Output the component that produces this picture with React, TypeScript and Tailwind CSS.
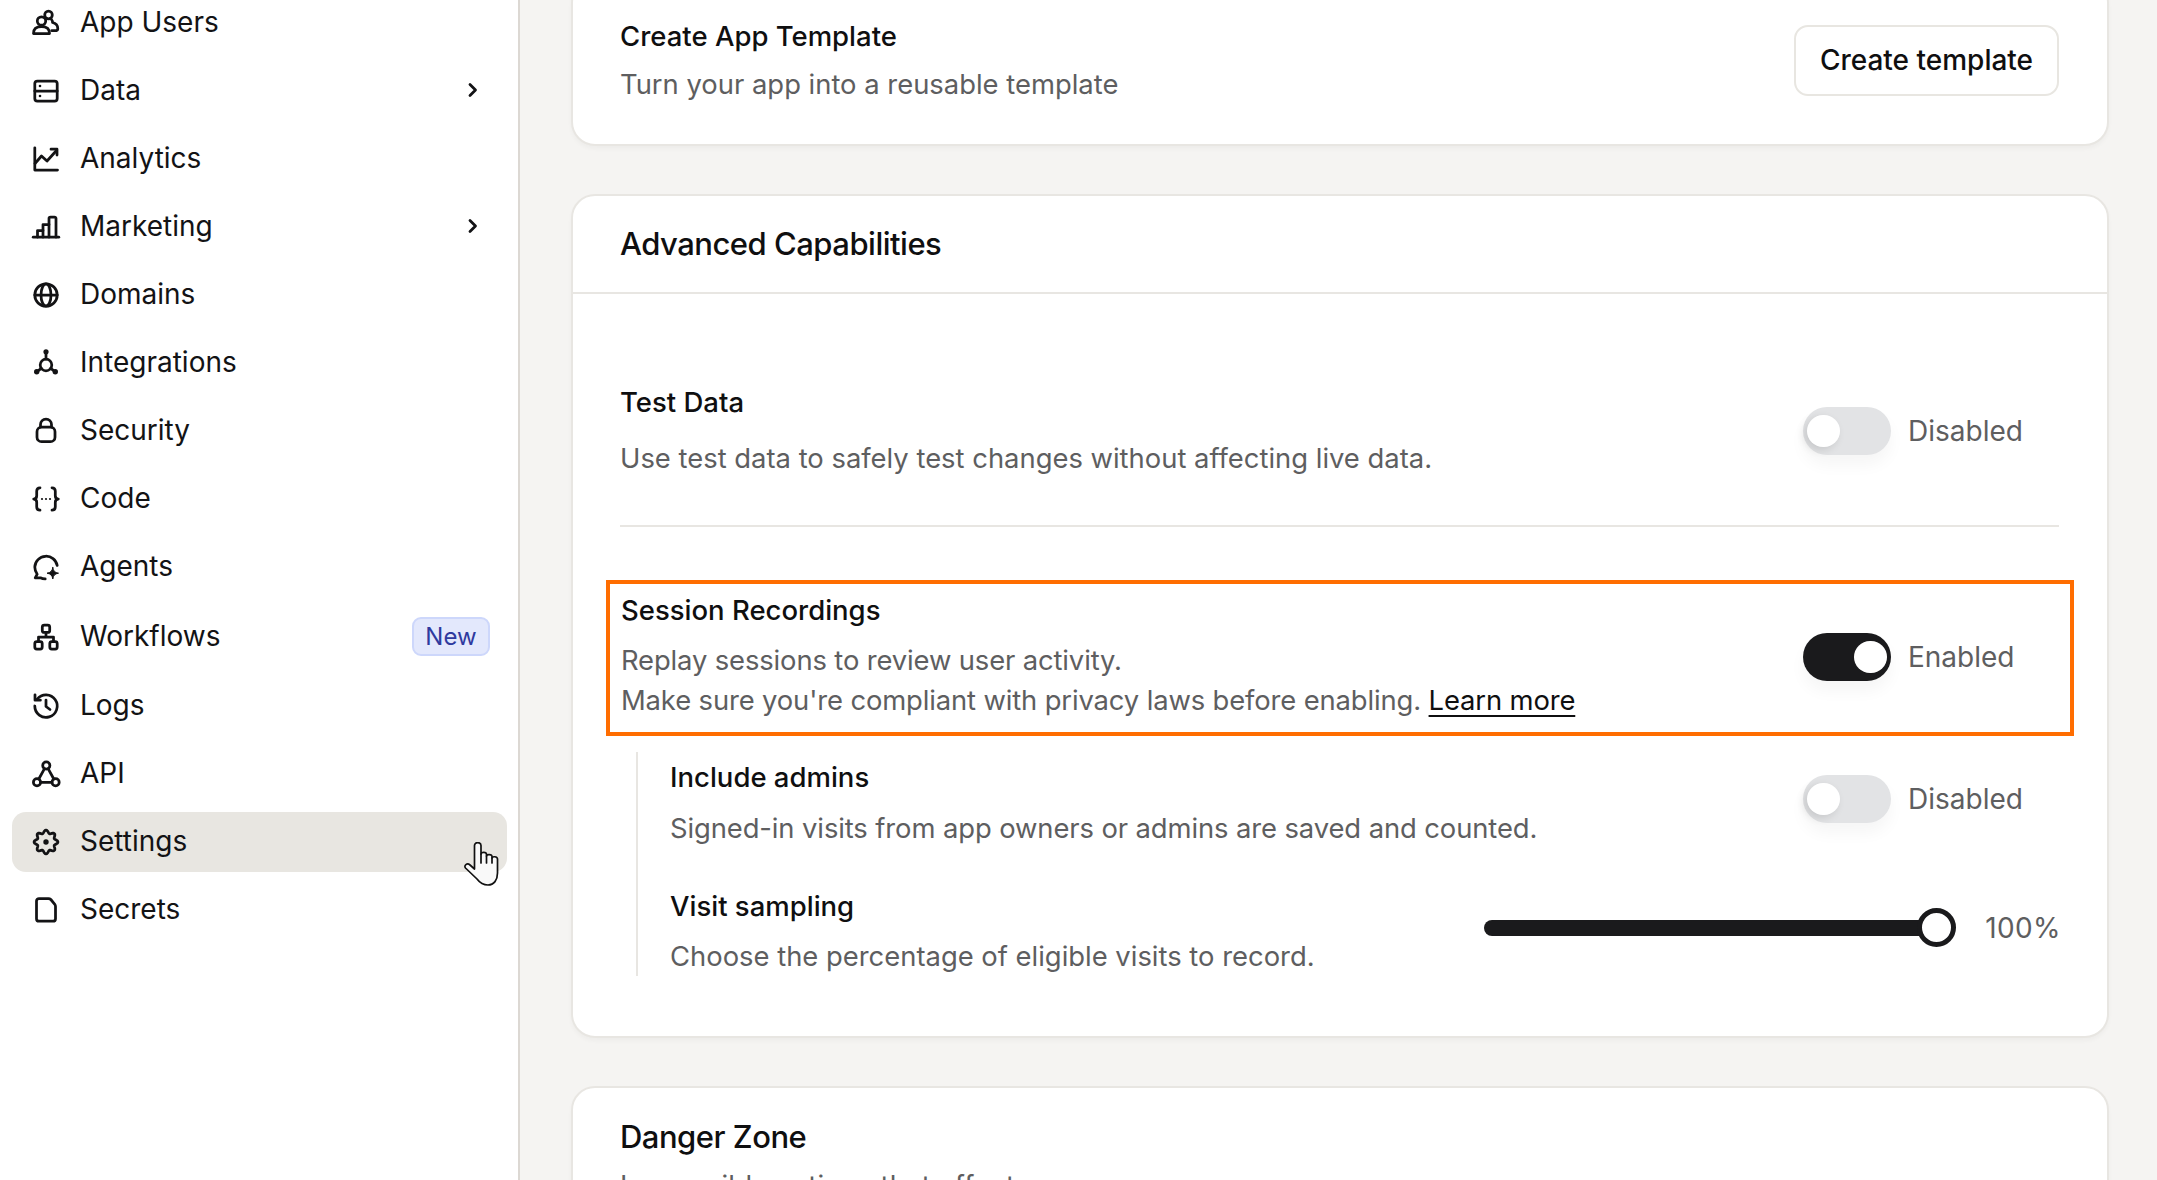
import React from "react";

const S = { fill: "none", stroke: "currentColor", strokeWidth: 2.75, strokeLinecap: "round" as const, strokeLinejoin: "round" as const };

function I({ children }: { children: React.ReactNode }) {
  return (
    <svg viewBox="0 0 30 30" className="w-[30px] h-[30px] shrink-0 text-[#131315]" {...S}>
      {children}
    </svg>
  );
}

const gear = (() => {
  const pts: string[] = [];
  for (let i = 0; i < 96; i++) {
    const a = (i / 96) * Math.PI * 2;
    const r = 10.4 + 1.5 * Math.cos(a * 8);
    pts.push(`${(15 + r * Math.sin(a)).toFixed(2)} ${(15 - r * Math.cos(a)).toFixed(2)}`);
  }
  return "M" + pts.join("L") + "Z";
})();

const icons: Record<string, React.ReactNode> = {
  users: (
    <I>
      <circle cx="17.5" cy="7" r="3.8" />
      <circle cx="10.5" cy="13" r="4.2" />
      <path d="M2.5 25.5c0-4.5 3-6.8 8-6.8s8 2.3 8 6.8z" />
      <path d="M20.5 11.5c.8 1 1.2 2 1 3 3.4.7 5.3 3 5.3 6.2 0 1.2-1.3 2-3 2h-3" />
    </I>
  ),
  data: (
    <I>
      <rect x="3.8" y="5" width="22.4" height="20" rx="2.6" />
      <path d="M3.8 15h22.4" />
      <circle cx="9" cy="10" r="1.3" fill="currentColor" stroke="none" />
      <circle cx="9" cy="20" r="1.3" fill="currentColor" stroke="none" />
    </I>
  ),
  analytics: (
    <I>
      <path d="M3.800 3.800V26H26.500" />
      <path d="M4 19.500 10.500 12l5.500 5L25.500 6.500" />
      <path d="M20 5.200h6V11" />
    </I>
  ),
  marketing: (
    <I>
      <path d="M2.200 25.200H27.800" />
      <path d="M6.500 25v-6.500h5.500" />
      <path d="M12 25V12.500h6V25" />
      <path d="M18 12.500V6.500a1.500 1.500 0 0 1 1.500-1.500h4A1.500 1.500 0 0 1 25 6.500V25" />
    </I>
  ),
  globe: (
    <I>
      <circle cx="15" cy="15" r="11.200" />
      <ellipse cx="15" cy="15" rx="5" ry="11.200" />
      <path d="M3.800 15h22.400" />
    </I>
  ),
  integrations: (
    <I>
      <circle cx="15" cy="17" r="5.800" />
      <path d="M15 4v7M10.300 20.300 6 23.700M19.700 20.300 24 23.700" />
      <circle cx="15" cy="3.800" r="2.600" fill="currentColor" stroke="none" />
      <circle cx="5.700" cy="23.800" r="2.700" fill="currentColor" stroke="none" />
      <circle cx="24.300" cy="23.800" r="2.700" fill="currentColor" stroke="none" />
    </I>
  ),
  lock: (
    <I>
      <rect x="6" y="11.200" width="18" height="14.500" rx="4.500" />
      <path d="M9.500 11V8.500a5.500 5.500 0 0 1 11 0V11" />
    </I>
  ),
  code: (
    <I>
      <path d="M9 3.800c-2.600 0-3.300 1.200-3.300 3.400v4.600c0 2-1.200 3.200-3 3.200 1.800 0 3 1.200 3 3.200v4.600c0 2.200.7 3.400 3.300 3.400" />
      <path d="M21 3.800c2.600 0 3.300 1.200 3.300 3.400v4.600c0 2 1.200 3.200 3 3.200-1.800 0-3 1.200-3 3.200v4.600c0 2.200-.7 3.400-3.300 3.400" />
      <circle cx="11" cy="15" r="1.100" fill="currentColor" stroke="none" />
      <circle cx="15" cy="15" r="1.100" fill="currentColor" stroke="none" />
      <circle cx="19" cy="15" r="1.100" fill="currentColor" stroke="none" />
    </I>
  ),
  agents: (
    <I>
      <path d="M26.200 13.500A11.300 11.300 0 0 0 3.800 15c0 2.800.9 5.200 2.400 7.200l-2 3.600h5.200c1.500.8 3 1.100 4.800 1.100" />
      <path d="M21.800 15.500c.5 3.600 2 5.100 5.700 5.700-3.700.6-5.200 2.100-5.700 5.800-.6-3.700-2.100-5.200-5.800-5.800 3.700-.6 5.200-2.100 5.800-5.700z" fill="currentColor" strokeWidth="1" />
    </I>
  ),
  workflows: (
    <I>
      <rect x="11.300" y="3" width="7.400" height="7.400" rx="2" />
      <rect x="3.800" y="19.600" width="7.400" height="7.400" rx="2" />
      <rect x="18.800" y="19.600" width="7.400" height="7.400" rx="2" />
      <path d="M15 10.500v4.500M7.500 19.500V15h15v4.500" />
    </I>
  ),
  logs: (
    <I>
      <path d="M6.200 8.200A11.200 11.200 0 1 1 3.800 15" />
      <path d="M4 3.800v5.400h5.400" />
      <path d="M15 9v6.500l4 3" />
    </I>
  ),
  api: (
    <I>
      <circle cx="15.300" cy="6.500" r="3.600" />
      <circle cx="6" cy="23.300" r="3.600" />
      <circle cx="24.600" cy="23.300" r="3.600" />
      <path d="M13.500 9.700 7.800 20M17.100 9.700 22.800 20M9.600 23.300h11.400" />
    </I>
  ),
  settings: (
    <I>
      <path d={gear} />
      <circle cx="15" cy="15" r="2.700" fill="currentColor" stroke="none" />
    </I>
  ),
  secrets: (
    <I>
      <path d="M8 3.500h9.500c1 0 1.700.4 2.300 1l4 4.800c.5.6.7 1.300.7 2.200v12.200a2.500 2.500 0 0 1-2.500 2.500H8a2.500 2.500 0 0 1-2.500-2.500V6A2.500 2.500 0 0 1 8 3.500z" />
    </I>
  ),
};

function Chevron() {
  return (
    <svg viewBox="0 0 12 16" className="w-[12px] h-[16px] text-[#131315]" fill="none" stroke="currentColor" strokeWidth="2.8" strokeLinecap="round" strokeLinejoin="round">
      <path d="M3 2.500 8.500 8 3 13.500" />
    </svg>
  );
}

function Row({ icon, label, chevron, badge, active }: { icon: string; label: string; chevron?: boolean; badge?: boolean; active?: boolean }) {
  return (
    <div className={`relative flex items-center gap-[19px] pl-[19px] rounded-[14px] ${badge ? "h-[63px]" : "h-[60px]"} ${active ? "bg-[#e8e6e1]" : ""}`}>
      {icons[icon]}
      <span className="-mt-[2px] text-[28px] leading-[36px] text-[#131315]">{label}</span>
      {chevron && (
        <span className="ml-auto mr-[28px] -mt-[2px] flex">
          <Chevron />
        </span>
      )}
      {badge && (
        <span className="ml-auto mr-[17px] flex items-center justify-center w-[78px] h-[39px] rounded-[9px] bg-[#e3e8fc] border-2 border-[#cdd7fb] text-[24px] text-[#2f3a9f]">
          New
        </span>
      )}
      {active && (
        <svg viewBox="0 0 35 45" className="absolute left-[452px] top-[30px] w-[35px] h-[45px]" fill="#f9f9f9" stroke="#111" strokeWidth="1.7" strokeLinejoin="round" strokeLinecap="round">
          <path d="M10.500 3.500C10.500-.3 17-.3 17 3.500V12c0-2.200 5.500-2.200 5.500.5V14c0-2 5.500-2 5.500.5V16c0-2 5.500-1.600 5.500 1V31c0 7-3.500 12-9.500 12-5 0-8-2-11-6L1.500 26c-2-2.500 1.500-5.500 4.500-3l4.500 4z" />
          <path d="M17 12v9M22.500 14v7M28 16v5" fill="none" />
        </svg>
      )}
    </div>
  );
}

function Toggle({ on, label, className = "" }: { on?: boolean; label: string; className?: string }) {
  return (
    <div className={`flex items-center gap-[17px] w-[256px] shrink-0 ${className}`}>
      <div className={`flex items-center h-[48px] w-[88px] rounded-full px-[4px] shadow-[0_10px_16px_rgba(0,0,0,0.04)] ${on ? "bg-[#1a1a1c] justify-end" : "bg-[#e2e3e5] justify-start"}`}>
        <div className={`w-[33px] h-[32px] rounded-full bg-white ${on ? "" : "shadow-[-3px_3px_8px_rgba(0,0,0,0.12)]"}`} />
      </div>
      <span className="text-[28px] leading-[36px] text-[#5e5e60]">{label}</span>
    </div>
  );
}

const title = "text-[27.500px] leading-[36px] font-medium text-[#0f0f10]";
const desc = "text-[27.400px] leading-[40px] text-[#5e5e60]";
const h2 = "text-[31px] leading-[40px] font-medium text-[#0f0f10] tracking-[-0.5px]";
const cardCls = "bg-white rounded-[24px] border-2 border-[#e8e6e2] shadow-[0_3px_4px_rgba(0,0,0,0.03)]";

export default function App() {
  return (
    <div className="flex h-screen w-full overflow-hidden bg-white" style={{ fontFamily: "Inter, 'Noto Sans', sans-serif" }}>
      <aside className="w-[520px] shrink-0 border-r-2 border-[#dcd8d3] bg-white pl-[12px] pr-[11px]">
        <nav className="flex flex-col gap-[8px] -mt-[7px]">
          <Row icon="users" label="App Users" />
          <Row icon="data" label="Data" chevron />
          <Row icon="analytics" label="Analytics" />
          <Row icon="marketing" label="Marketing" chevron />
          <Row icon="globe" label="Domains" />
          <Row icon="integrations" label="Integrations" />
          <Row icon="lock" label="Security" />
          <Row icon="code" label="Code" />
          <Row icon="agents" label="Agents" />
          <Row icon="workflows" label="Workflows" badge />
          <Row icon="logs" label="Logs" />
          <Row icon="api" label="API" />
          <Row icon="settings" label="Settings" active />
          <Row icon="secrets" label="Secrets" />
        </nav>
      </aside>

      <main className="flex-1 min-w-0 bg-[#f5f4f2] pl-[51px] pr-[48px]">
        <div className="flex flex-col -mt-[21px]">
          <section className={`${cardCls} flex items-center justify-between pl-[47px] pr-[48px] pt-[37px] pb-[39px]`}>
            <div>
              <div className={title}>Create App Template</div>
              <div className={`${desc} mt-[11px] -translate-y-[1px]`}>Turn your app into a reusable template</div>
            </div>
            <button className="w-[265px] h-[71px] -mt-[3px] rounded-[14px] border-2 border-[#e8e6e1] bg-white text-[28px] font-medium text-[#0f0f10]">
              Create template
            </button>
          </section>

          <section className={`${cardCls} mt-[48px]`}>
            <div className="flex items-center h-[98px] pl-[47px] pr-[48px] border-b-2 border-[#e8e6e2]">
              <h2 className={h2}>Advanced Capabilities</h2>
            </div>

            <div className="pl-[47px] pr-[48px] pb-[60px]">
              <div className="flex items-center justify-between pt-[90px] pb-[47px] border-b-2 border-[#e8e6e2]">
                <div>
                  <div className={title}>Test Data</div>
                  <div className={`${desc} mt-[18px]`}>Use test data to safely test changes without affecting live data.</div>
                </div>
                <Toggle label="Disabled" />
              </div>

              <div className="flex items-center justify-between mt-[53px] -ml-[14px] -mr-[15px] pl-[11px] pr-[11px] pt-[8px] pb-[12px] border-4 border-[#ff6d00]">
                <div>
                  <div className={title}>Session Recordings</div>
                  <div className={`${desc} mt-[12px] tracking-[-0.13px]`}>Replay sessions to review user activity.</div>
                  <div className={`${desc} tracking-[-0.13px]`}>
                    Make sure you're compliant with privacy laws before enabling.{" "}
                    <a className="text-[#0f0f10] underline decoration-2 underline-offset-[5px]">Learn more</a>
                  </div>
                </div>
                <Toggle on label="Enabled" className="mt-[2px]" />
              </div>

              <div className="mt-[16px] ml-[16px] pl-[32px] pt-[7px] border-l-2 border-[#e8e6e2]">
                <div className="flex items-start justify-between">
                  <div>
                    <div className={title}>Include admins</div>
                    <div className={`${desc} mt-[13px] tracking-[-0.1px]`}>Signed-in visits from app owners or admins are saved and counted.</div>
                  </div>
                  <Toggle label="Disabled" className="mt-[16px]" />
                </div>
                <div className="flex items-start justify-between mt-[40px]">
                  <div>
                    <div className={title}>Visit sampling</div>
                    <div className={`${desc} mt-[12px]`}>Choose the percentage of eligible visits to record.</div>
                  </div>
                  <div className="flex items-center gap-[29px] mt-[20px] -mr-[2px]">
                    <div className="flex items-center w-[472px]">
                      <div className="flex-1 h-[16px] rounded-l-full bg-[#1a1a1c] -mr-[2px]" />
                      <div className="w-[39px] h-[39px] rounded-full border-[5px] border-[#1a1a1c] bg-white" />
                    </div>
                    <span className="text-[28px] leading-[36px] tracking-[0.4px] text-[#5e5e60]">100%</span>
                  </div>
                </div>
              </div>
            </div>
          </section>

          <section className={`${cardCls} mt-[48px] pl-[47px] pr-[48px] pt-[29px]`}>
            <h2 className={h2}>Danger Zone</h2>
            <div className={`${desc} mt-[8px] tracking-[0.3px]`}>Irreversible actions that affect your app.</div>
          </section>
        </div>
      </main>
    </div>
  );
}
